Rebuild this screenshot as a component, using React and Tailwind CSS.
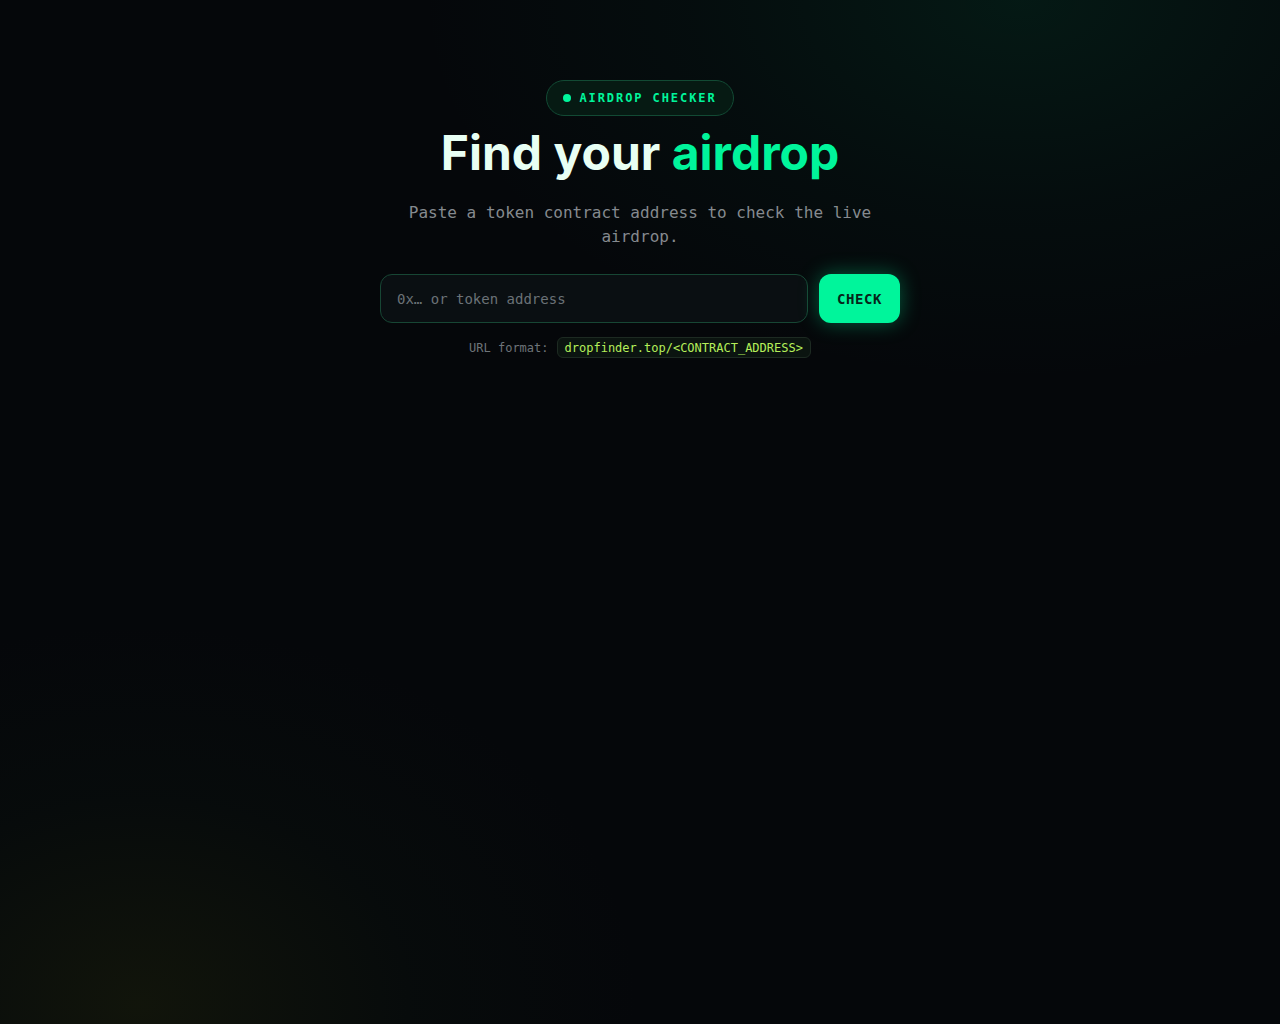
const mono = "font-['DejaVu_Sans_Mono','Liberation_Mono',monospace]";

const App = () => {
  return (
    <div className="relative min-h-screen w-full overflow-hidden bg-[#05070a]">
      {/* background glows */}
      <div className="pointer-events-none absolute -top-[380px] left-[420px] h-[760px] w-[1200px] rounded-full bg-[radial-gradient(closest-side,rgba(0,170,105,0.11),rgba(0,120,80,0.05)_55%,transparent)]" />
      <div className="pointer-events-none absolute -bottom-[360px] -left-[360px] h-[760px] w-[1000px] rounded-full bg-[radial-gradient(closest-side,rgba(80,90,15,0.16),rgba(30,60,25,0.07)_55%,transparent)]" />

      <main className="relative flex flex-col items-center pt-20">
        {/* badge */}
        <div className="flex h-9 items-center gap-2 rounded-full border border-[#124a34] bg-[#061a13] px-4">
          <span className="h-2 w-2 rounded-full bg-[#00f59b]" />
          <span className={`${mono} text-xs font-semibold tracking-[0.16em] text-[#00f59b]`}>
            AIRDROP CHECKER
          </span>
        </div>

        {/* heading */}
        <h1 className="mt-[10px] font-['Inter','Noto_Sans',sans-serif] text-[48px] font-bold leading-[54px] text-[#e8fff4]">
          Find your <span className="text-[#00f59b]">airdrop</span>
        </h1>

        <p className={`${mono} mt-[21px] w-[480px] text-center text-base leading-6 text-[#858a8f]`}>
          Paste a token contract address to check the live airdrop.
        </p>

        {/* search */}
        <div className="mt-[25px] flex w-[520px] items-center gap-[11px]">
          <input
            type="text"
            placeholder="0x… or token address"
            className={`${mono} h-[49px] flex-1 rounded-xl border border-[#174634] bg-[#0a0f12] px-4 text-sm text-[#cfd6d3] placeholder:text-[#6b7277] outline-none`}
          />
          <button
            type="button"
            className={`${mono} h-[49px] w-[81px] rounded-xl bg-[#00f59b] text-sm font-bold tracking-[0.04em] text-[#06251a] shadow-[0_0_20px_rgba(0,245,155,0.35)]`}
          >
            CHECK
          </button>
        </div>

        {/* url hint */}
        <div className="mt-[14px] flex items-center gap-2">
          <span className={`${mono} text-xs text-[#6e7479]`}>URL format:</span>
          <code className={`${mono} flex h-[21px] items-center rounded-md border border-[#1d2a22] bg-[#0b1410] px-[7px] text-xs text-[#b5ef5a]`}>
            dropfinder.top/&lt;CONTRACT_ADDRESS&gt;
          </code>
        </div>
      </main>
    </div>
  );
};

export default App;
